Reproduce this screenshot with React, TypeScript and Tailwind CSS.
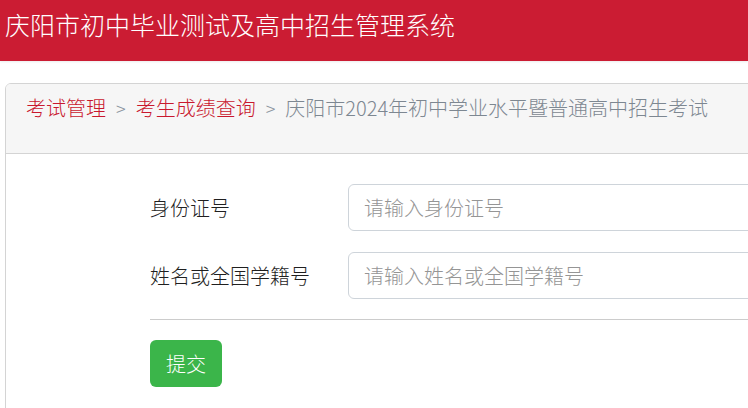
import React from "react";

const font = { fontFamily: '"Noto Sans CJK SC", "Noto Sans", sans-serif' };

function Field({ label, placeholder }: { label: string; placeholder: string }) {
  return (
    <div className="flex items-center">
      <label className="w-[198px] shrink-0 text-[20px] leading-[30px] text-[#1f1f1f]">
        {label}
      </label>
      <input
        type="text"
        placeholder={placeholder}
        className="h-[47px] w-[520px] shrink-0 rounded-[6px] border border-[#ced4da] bg-white px-[15px] text-[20px] font-light text-[#333] outline-none placeholder:text-[#959595]"
      />
    </div>
  );
}

export default function App() {
  return (
    <div className="h-[408px] w-[748px] overflow-hidden bg-white font-light" style={font}>
      <div className="h-[61px] bg-[#cb1c33] pl-[5px] pt-[9px] text-[25px] leading-[30px] text-white shadow-[0_1px_2px_rgba(0,0,0,0.08)]">
        庆阳市初中毕业测试及高中招生管理系统
      </div>
      <div className="pl-[5px] pt-[22px]">
        <div className="w-[820px] overflow-hidden rounded-[6px] border border-[#d4d4d4]">
          <div className="h-[70px] border-b border-[#d4d4d4] bg-[#f6f6f6] pl-[20px] pt-[9px] text-[20px] leading-[30px]">
            <a className="text-[#c9182e]">考试管理</a>
            <span className="px-[10px] text-[18px] text-[#8a949e]">&gt;</span>
            <a className="text-[#c9182e]">考生成绩查询</a>
            <span className="px-[10px] text-[18px] text-[#8a949e]">&gt;</span>
            <span className="text-[#7d8791]">庆阳市2024年初中学业水平暨普通高中招生考试</span>
          </div>
          <div className="pb-[30px] pl-[144px] pt-[30px]">
            <div className="flex flex-col gap-[21px]">
              <Field label="身份证号" placeholder="请输入身份证号" />
              <Field label="姓名或全国学籍号" placeholder="请输入姓名或全国学籍号" />
            </div>
            <hr className="mt-[20px] border-t border-[#cccccc]" />
            <button className="mt-[20px] h-[47px] w-[72px] rounded-[6px] bg-[#3bb54a] text-[20px] leading-[30px] text-white">
              提交
            </button>
          </div>
        </div>
      </div>
    </div>
  );
}
